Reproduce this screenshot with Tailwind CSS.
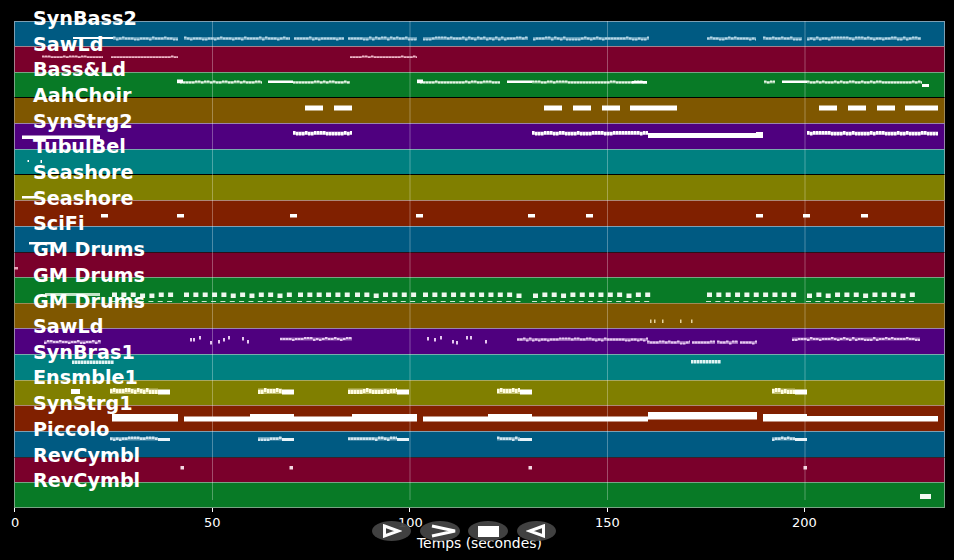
<!DOCTYPE html>
<html lang="fr">
<head>
  <meta charset="UTF-8" />
  <title>Pistes MIDI</title>
  <script src="https://cdn.jsdelivr.net/npm/@tailwindcss/browser@4"></script>
</head>
<body class="bg-black text-white font-['DejaVu_Sans',sans-serif] w-[954px] h-[560px] overflow-hidden relative">
  <!-- Plot area -->
  <div class="relative ml-[14px] pt-[21px] w-[931px]">
    <div class="flex flex-col">
      <div class="relative h-[25px] bg-[#005a82] border border-b-0 border-[#7d9fb3]"><span class="absolute left-[18px] top-[-15px] text-[19.2px] leading-[24px] font-bold z-20">SynBass2</span></div>
      <div class="relative h-[26px] bg-[#7a002b] border border-b-0 border-[#a4808c]"><span class="absolute left-[18px] top-[-14px] text-[19.2px] leading-[24px] font-bold z-20">SawLd</span></div>
      <div class="relative h-[25px] bg-[#087a26] border border-b-0 border-[#78a484]"><span class="absolute left-[18px] top-[-15px] text-[19.2px] leading-[24px] font-bold z-20">Bass&amp;Ld</span></div>
      <div class="relative h-[26px] bg-[#7f5700] border border-b-0 border-t-black border-[#a08a58]"><span class="absolute left-[18px] top-[-14px] text-[19.2px] leading-[24px] font-bold z-20">AahChoir</span></div>
      <div class="relative h-[26px] bg-[#4f007f] border border-b-0 border-[#9a84ae]"><span class="absolute left-[18px] top-[-14px] text-[19.2px] leading-[24px] font-bold z-20">SynStrg2</span></div>
      <div class="relative h-[25px] bg-[#008080] border border-b-0 border-[#78acac]"><span class="absolute left-[18px] top-[-15px] text-[19.2px] leading-[24px] font-bold z-20">TubulBel</span></div>
      <div class="relative h-[26px] bg-[#807f00] border border-b-0 border-t-black border-[#a8a860]"><span class="absolute left-[18px] top-[-14px] text-[19.2px] leading-[24px] font-bold z-20">Seashore</span></div>
      <div class="relative h-[26px] bg-[#802000] border border-b-0 border-[#ad8878]"><span class="absolute left-[18px] top-[-14px] text-[19.2px] leading-[24px] font-bold z-20">Seashore</span></div>
      <div class="relative h-[26px] bg-[#005a82] border border-b-0 border-[#7d9fb3]"><span class="absolute left-[18px] top-[-15px] text-[19.2px] leading-[24px] font-bold z-20">SciFi</span></div>
      <div class="relative h-[25px] bg-[#7a002b] border border-b-0 border-t-[#2a1018] border-[#a4808c]"><span class="absolute left-[18px] top-[-15px] text-[19.2px] leading-[24px] font-bold z-20">GM Drums</span></div>
      <div class="relative h-[26px] bg-[#087a26] border border-b-0 border-[#78a484]"><span class="absolute left-[18px] top-[-14px] text-[19.2px] leading-[24px] font-bold z-20">GM Drums</span></div>
      <div class="relative h-[25px] bg-[#7f5700] border border-b-0 border-[#a08a58]"><span class="absolute left-[18px] top-[-14px] text-[19.2px] leading-[24px] font-bold z-20">GM Drums</span></div>
      <div class="relative h-[26px] bg-[#4f007f] border border-b-0 border-[#9a84ae]"><span class="absolute left-[18px] top-[-14px] text-[19.2px] leading-[24px] font-bold z-20">SawLd</span></div>
      <div class="relative h-[26px] bg-[#008080] border border-b-0 border-[#78acac]"><span class="absolute left-[18px] top-[-14px] text-[19.2px] leading-[24px] font-bold z-20">SynBras1</span></div>
      <div class="relative h-[25px] bg-[#807f00] border border-b-0 border-[#a8a860]"><span class="absolute left-[18px] top-[-15px] text-[19.2px] leading-[24px] font-bold z-20">Ensmble1</span></div>
      <div class="relative h-[26px] bg-[#802000] border border-b-0 border-[#ad8878]"><span class="absolute left-[18px] top-[-14px] text-[19.2px] leading-[24px] font-bold z-20">SynStrg1</span></div>
      <div class="relative h-[26px] bg-[#005a82] border border-b-0 border-[#7d9fb3]"><span class="absolute left-[18px] top-[-14px] text-[19.2px] leading-[24px] font-bold z-20">Piccolo</span></div>
      <div class="relative h-[25px] bg-[#7a002b] border border-b-0 border-t-[#3a2028] border-[#a4808c]"><span class="absolute left-[18px] top-[-14px] text-[19.2px] leading-[24px] font-bold z-20">RevCymbl</span></div>
      <div class="relative h-[26px] bg-[#087a26] border border-[#78a484]"><span class="absolute left-[18px] top-[-14px] text-[19.2px] leading-[24px] font-bold z-20">RevCymbl</span></div>
    </div>

    <!-- Grid lines and notes -->
    <svg id="notes" class="absolute left-0 top-0 z-10 blur-[0.35px]" width="931" height="500" viewBox="14 0 931 500"></svg>

    <!-- Ticks -->
    <div class="absolute left-0 top-[508px] w-px h-[4px] bg-white"></div>
    <div class="absolute left-[198px] top-[508px] w-px h-[4px] bg-white"></div>
    <div class="absolute left-[395px] top-[508px] w-px h-[4px] bg-white"></div>
    <div class="absolute left-[593px] top-[508px] w-px h-[4px] bg-white"></div>
    <div class="absolute left-[790px] top-[508px] w-px h-[4px] bg-white"></div>
    <span class="absolute left-[-3px] top-[515px] text-[13px] leading-[16px]">0</span>
    <span class="absolute left-[190px] top-[515px] text-[13px] leading-[16px]">50</span>
    <span class="absolute left-[384px] top-[515px] text-[13px] leading-[16px]">100</span>
    <span class="absolute left-[581px] top-[515px] text-[13px] leading-[16px]">150</span>
    <span class="absolute left-[778px] top-[515px] text-[13px] leading-[16px]">200</span>
  </div>

  <div class="absolute left-[417px] top-[535px] text-[13.9px] leading-[16px] whitespace-nowrap">Temps (secondes)</div>

  <!-- Playback controls -->
  <div class="absolute left-[372px] top-[521px] flex gap-[8.67px] z-30">
    <button class="w-[39px] h-[20px] rounded-[50%] bg-[#444]/95 flex items-center justify-center">
      <svg width="20" height="14" viewBox="0 0 20 14"><path d="M2.5 2 L16.5 7 L2.5 12 Z" fill="none" stroke="#fff" stroke-width="3"/></svg>
    </button>
    <button class="w-[40px] h-[20px] rounded-[50%] bg-[#444]/95 flex items-center justify-center pl-[10px]">
      <svg width="28" height="14" viewBox="0 0 28 14"><path d="M1 2 L24 7 L1 12" fill="none" stroke="#fff" stroke-width="3"/></svg>
    </button>
    <button class="w-[40px] h-[20px] rounded-[50%] bg-[#444]/95 flex items-center justify-center">
      <span class="block w-[21px] h-[11px] bg-white"></span>
    </button>
    <button class="w-[39px] h-[20px] rounded-[50%] bg-[#444]/95 flex items-center justify-center">
      <svg width="20" height="14" viewBox="0 0 20 14"><path d="M17.5 2 L3.5 7 L17.5 12 Z" fill="none" stroke="#fff" stroke-width="3"/></svg>
    </button>
  </div>

  <script>
    const svg = document.getElementById("notes");
    const NS = "http://www.w3.org/2000/svg";
    let seed = 7;
    const rnd = () => (seed = (seed * 16807) % 2147483647) / 2147483647;

    function rect(x, y, w, h, fill, alpha = 1) {
      const r = document.createElementNS(NS, "rect");
      r.setAttribute("x", x);
      r.setAttribute("y", y);
      r.setAttribute("width", w);
      r.setAttribute("height", h);
      r.setAttribute("fill", fill);
      r.setAttribute("opacity", alpha);
      svg.appendChild(r);
    }

    // grid
    [212, 409.5, 607, 804.5].forEach(x => rect(x, 21, 1, 487, "#fff", 0.3));

    // solid notes: x1, x2, y, h
    const solid = (list, fill) => list.forEach(n => rect(n[0], n[2], n[1] - n[0], n[3], fill));

    // wobbly melody: a soft band with short notes over it
    function melody(x1, x2, y, h, fill, amp = 2, step = 3) {
      rect(x1, y + 0.5, x2 - x1, h + amp - 1, fill, 0.5);
      for (let x = x1; x < x2; x += step) {
        const w = Math.min(step - 0.5, x2 - x);
        rect(x, y + Math.round(rnd() * amp), w, h, fill);
      }
    }

    // row 1
    solid([[73, 113, 37, 2]], "#fff");
    [[113, 178], [184, 290], [294, 344], [348, 417], [423, 528], [533, 649], [707, 756], [763, 802], [807, 921]]
      .forEach(s => melody(s[0], s[1], 36.5, 2, "#b4d6e6", 2));
    // row 2
    [[42, 103], [111, 178], [350, 417]].forEach(s => melody(s[0], s[1], 55.5, 1.5, "#eeb4c6", 1.5));
    // row 3
    [[177, 262], [293, 350], [417, 500], [532, 647], [764, 775], [807, 922]]
      .forEach(s => melody(s[0], s[1], 80.5, 2, "#e6f5e6", 1.5));
    solid([[268, 293, 80.5, 2.5], [507, 532, 80.5, 2.5], [782, 807, 80.5, 2.5], [922, 929, 84, 3], [177, 183, 79.5, 3.5], [417, 423, 79.5, 3.5], [632, 647, 81, 2.5]], "#fff");
    // row 4
    solid([[305, 323, 105.5, 5], [334, 352, 105.5, 5], [544, 562, 105.5, 5], [573, 591, 105.5, 5], [602, 620, 105.5, 5],
      [630, 677, 105.5, 5], [819, 837, 105.5, 5], [848, 866, 105.5, 5], [877, 895, 105.5, 5], [905, 938, 105.5, 5]], "#fff");
    // row 5
    solid([[22, 100, 135.5, 3.5], [648, 756, 133, 5], [756, 763, 132, 6]], "#fff");
    [[293, 352], [532, 648], [807, 938]].forEach(s => melody(s[0], s[1], 131, 3.5, "#fff", 1));
    // row 6
    solid([[27.5, 29, 160, 2], [40.5, 42, 160, 3]], "#fff");
    // row 7
    solid([[22, 37, 196, 2.5]], "#fff");
    // row 8
    [101, 177, 290, 416, 528, 586, 756, 803, 861].forEach(x => rect(x, 214, 7, 3.5, "#fff"));
    // row 9
    solid([[29, 53, 242, 2.5]], "#fff");
    // row 10
    solid([[14, 18, 267, 2.5]], "#e8a8bc");
    // row 11
    solid([[45, 100, 293, 3]], "#c4e4c8");
    [[112, 178], [184, 290], [298, 350], [355, 417], [423, 528], [533, 649], [707, 802], [807, 920]].forEach(s => {
      for (let x = s[0]; x < s[1] - 3; x += 9.35) {
        rect(x, 292.5 + Math.round(rnd() * 0.6), 5, 4.5, "#eef8ee");
        rect(x - 1, 301, 5, 1, "#cfe8d2");
      }
    });
    // row 12
    [650, 654, 662, 680, 691].forEach(x => rect(x, 319.5, 1.5, 3.5, "#e8d49a"));
    // row 13
    [[190, 338], [193, 338], [199, 336], [210, 341], [218, 340], [223, 338], [228, 336], [242, 337], [247, 340],
      [427, 337], [434, 338], [440, 336], [452, 340], [456, 341], [466, 336], [470, 336], [485, 340]]
      .forEach(m => rect(m[0], m[1], 2, 3.5, "#e6c8f0"));
    [[44, 101, 340], [280, 352, 337], [517, 648, 337.5], [792, 920, 337]].forEach(s => melody(s[0], s[1], s[2], 2, "#e6c8f0", 2));
    [[647, 690], [692, 715], [717, 738], [740, 757]].forEach(s => melody(s[0], s[1], 340.5, 2, "#e6c8f0", 2));
    // row 14
    [[72, 113], [691, 720]].forEach(s => {
      for (let x = s[0]; x < s[1]; x += 3) rect(x, s[0] === 72 ? 360.5 : 360, 2.6, 3.5, "#e0f4f4");
    });
    // row 15
    solid([[71, 80, 389, 5]], "#fff");
    [[110, 170], [258, 294], [348, 409], [497, 532], [772, 807]].forEach(s => {
      melody(s[0], s[1] - 12, 388, 4, "#fffde0", 2.5);
      rect(s[1] - 12, 389.5, 12, 5, "#fff");
    });
    // row 16
    solid([[112, 178, 414, 7.5], [184, 250, 416.5, 5], [250, 294, 414, 7.5], [294, 352, 416.5, 5], [352, 417, 414, 7.5],
      [423, 488, 416.5, 5], [488, 532, 414, 7.5], [532, 648, 416.5, 5], [648, 757, 412, 7.5], [763, 807, 414, 7.5], [807, 938, 416, 5.5]], "#fff");
    // row 17
    [[110, 170], [258, 294], [348, 409], [497, 532], [772, 807]].forEach(s => {
      melody(s[0], s[1] - 12, 436.5, 2.5, "#cfe6f2", 2);
      rect(s[1] - 12, 438, 12, 3, "#e8f4fa");
    });
    // row 18
    [180.5, 289.5, 528.5, 803.5].forEach(x => rect(x, 466, 3.5, 3.5, "#f4d8e2"));
    // row 19
    solid([[920, 931, 494, 5]], "#f2faf2");
  </script>
</body>
</html>
